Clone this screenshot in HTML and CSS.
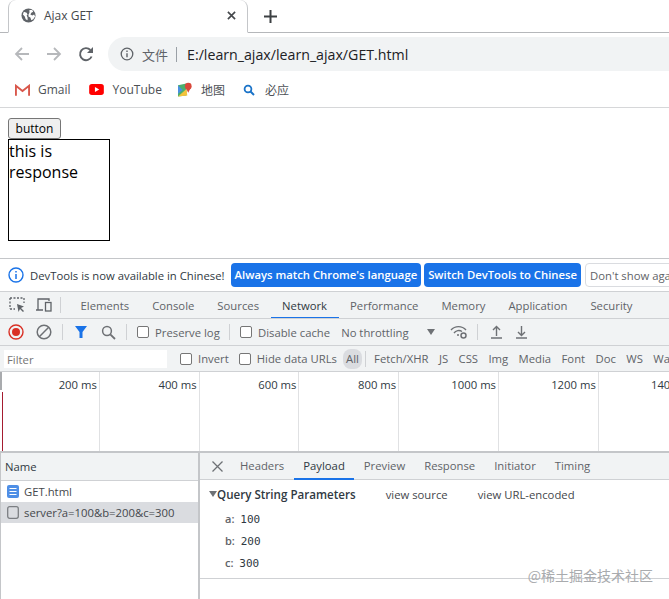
FILE: index.html
```html
<!DOCTYPE html>
<html lang="zh-CN">
<head>
    <meta charset="UTF-8">
    <title>Ajax GET</title>
    <link rel="stylesheet" href="styles.css">
</head>
<body>
    <div class="tabstrip">
        <div class="tab">
            <svg class="tab-icon" width="15" height="15" viewBox="0 0 16 16"><circle cx="8" cy="8" r="7.500" fill="#5f6368"/><path d="M3 4l3 1 1 2-1 1 1 2v3l-2-1-1-3-2-2zM9 2h3l1 2-2 1-1 2 2 1 2-1 1 2-2 3-2 1-1-3-2-1 0-2 1-2z" fill="#fff"/></svg>
            <span class="tab-title">Ajax GET</span>
            <svg class="tab-close" width="9" height="9" viewBox="0 0 10 10"><path d="M1 1l8 8M9 1l-8 8" stroke="#45484c" stroke-width="1.800"/></svg>
        </div>
        <svg class="new-tab" width="13" height="13" viewBox="0 0 13 13"><path d="M6.500 0v13M0 6.500h13" stroke="#3c4043" stroke-width="2"/></svg>
    </div>
    <div class="toolbar">
        <svg width="16" height="16" viewBox="0 0 16 16"><path d="M15 8H2M8 2L2 8l6 6" fill="none" stroke="#b6b8bb" stroke-width="1.800"/></svg>
        <svg width="16" height="16" viewBox="0 0 16 16"><path d="M1 8h13M8 2l6 6-6 6" fill="none" stroke="#b6b8bb" stroke-width="1.800"/></svg>
        <svg width="16" height="16" viewBox="0 0 16 16"><path d="M13.600 10.500A6 6 0 1 1 12.400 4" fill="none" stroke="#5f6368" stroke-width="1.900"/><path d="M15 1v6H9z" fill="#5f6368"/></svg>
        <div class="omnibox">
            <svg width="14" height="14" viewBox="0 0 15 15"><circle cx="7.500" cy="7.500" r="6.200" fill="none" stroke="#5f6368" stroke-width="1.400"/><path d="M7.500 6.600v4.400M7.500 3.800v1.600" stroke="#5f6368" stroke-width="1.500"/></svg>
            <span class="omni-label">文件</span>
            <span class="omni-sep"></span>
            <span class="omni-url">E:/learn_ajax/learn_ajax/GET.html</span>
        </div>
    </div>
    <div class="bookmarks">
        <span class="bookmark bookmark-gmail">
            <svg width="15" height="12" viewBox="0 0 16 12"><path d="M1 12V1.500L8 7l7-5.500V12" fill="none" stroke="#d9574b" stroke-width="2"/></svg>
            Gmail
        </span>
        <span class="bookmark bookmark-yt">
            <svg width="15" height="11" viewBox="0 0 16 12"><rect width="16" height="12" rx="3" fill="#f00"/><path d="M6.300 3.300v5.400L11 6z" fill="#fff"/></svg>
            YouTube
        </span>
        <span class="bookmark bookmark-maps">
            <svg width="14" height="15" viewBox="0 0 15 15"><path d="M0 3l9-2v13l-9 1z" fill="#4caf6d"/><path d="M0 15L9 7l1 7z" fill="#f5c33b"/><path d="M0 3l5 5-5 4z" fill="#4a90e2"/><circle cx="11" cy="4" r="3.600" fill="#d9483b"/><path d="M8.500 6l2.500 5 2.500-5z" fill="#d9483b"/></svg>
            地图
        </span>
        <span class="bookmark bookmark-bing">
            <svg width="12" height="12" viewBox="0 0 12 12"><circle cx="5" cy="5" r="3.400" fill="none" stroke="#1a73c8" stroke-width="1.800"/><path d="M7.500 7.500L11 11" stroke="#1a73c8" stroke-width="2"/></svg>
            必应
        </span>
    </div>

    <div class="page">
        <button class="page-btn">button</button>
        <div class="response">this is response</div>
    </div>

    <div class="devtools">
        <div class="infobar">
            <svg width="16" height="16" viewBox="0 0 16 16"><circle cx="8" cy="8" r="7" fill="none" stroke="#1a73e8" stroke-width="1.400"/><path d="M8 7v5M8 4v1.600" stroke="#1a73e8" stroke-width="1.500"/></svg>
            <span class="info-text">DevTools is now available in Chinese!</span>
            <span class="info-btn">Always match Chrome's language</span>
            <span class="info-btn">Switch DevTools to Chinese</span>
            <span class="info-btn info-btn-plain">Don't show again</span>
        </div>

        <div class="dt-tabs">
            <svg class="dt-icon" width="16" height="16" viewBox="0 0 16 16"><path d="M1 1h14M1 1v11M15 1v5M1 12h5" fill="none" stroke="#5f6368" stroke-width="1.300" stroke-dasharray="2 1.500"/><path d="M8 7l7 2.500-3 1.500 3 3-1 1-3-3-1.500 3z" fill="#5f6368"/></svg>
            <svg class="dt-icon dt-icon-device" width="17" height="14" viewBox="0 0 17 14"><path d="M1 12h7M3 12V1h11v2" fill="none" stroke="#5f6368" stroke-width="1.300"/><rect x="10.500" y="4.500" width="5.500" height="8.500" fill="none" stroke="#5f6368" stroke-width="1.300"/></svg>
            <span class="vsep"></span>
            <span class="dt-tab">Elements</span>
            <span class="dt-tab">Console</span>
            <span class="dt-tab">Sources</span>
            <span class="dt-tab active">Network</span>
            <span class="dt-tab">Performance</span>
            <span class="dt-tab">Memory</span>
            <span class="dt-tab">Application</span>
            <span class="dt-tab">Security</span>
        </div>

        <div class="net-toolbar">
            <svg width="16" height="16" viewBox="0 0 16 16"><circle cx="8" cy="8" r="7" fill="none" stroke="#d93025" stroke-width="1.400"/><circle cx="8" cy="8" r="4" fill="#d93025"/></svg>
            <svg class="ml12" width="16" height="16" viewBox="0 0 16 16"><circle cx="8" cy="8" r="6.800" fill="none" stroke="#6e7175" stroke-width="1.500"/><path d="M3.300 12.700l9.400-9.400" stroke="#6e7175" stroke-width="1.500"/></svg>
            <span class="vsep ml10"></span>
            <svg class="ml11" width="14" height="14" viewBox="0 0 14 14"><path d="M1 1h12L8.500 7v6h-3V7z" fill="#1a73e8"/></svg>
            <svg class="ml13" width="15" height="15" viewBox="0 0 15 15"><circle cx="6" cy="6" r="4.400" fill="none" stroke="#6e7175" stroke-width="1.500"/><path d="M9.300 9.300L14 14" stroke="#6e7175" stroke-width="1.800"/></svg>
            <span class="vsep ml10"></span>
            <label class="check check-preserve"><span class="box"></span>Preserve log</label>
            <span class="vsep"></span>
            <label class="check ml10"><span class="box"></span>Disable cache</label>
            <span class="throttle">No throttling</span>
            <span class="caret"></span>
            <svg class="wifi" width="18" height="14" viewBox="0 0 18 14"><path d="M1 5a10 10 0 0 1 15 0M4 8a6 6 0 0 1 8-1.500" fill="none" stroke="#6e7175" stroke-width="1.400"/><circle cx="8" cy="10" r="1" fill="#6e7175"/><circle cx="13.500" cy="10.500" r="2.500" fill="none" stroke="#6e7175" stroke-width="1.500"/></svg>
            <span class="vsep ml9"></span>
            <svg class="ml12" width="13" height="14" viewBox="0 0 13 14"><path d="M6.500 11V2M3 5l3.500-3.500L10 5M1 13h11" fill="none" stroke="#6e7175" stroke-width="1.400"/></svg>
            <svg class="ml12" width="13" height="14" viewBox="0 0 13 14"><path d="M6.500 1v9M3 7l3.500 3.500L10 7M1 13h11" fill="none" stroke="#6e7175" stroke-width="1.400"/></svg>
        </div>

        <div class="filter-row">
            <span class="filter-input">Filter</span>
            <label class="check check-invert"><span class="box"></span>Invert</label>
            <label class="check check-hide"><span class="box"></span>Hide data URLs</label>
            <span class="type type-all">All</span>
            <span class="vsep"></span>
            <span class="type">Fetch/XHR</span>
            <span class="type">JS</span>
            <span class="type">CSS</span>
            <span class="type">Img</span>
            <span class="type">Media</span>
            <span class="type">Font</span>
            <span class="type">Doc</span>
            <span class="type">WS</span>
            <span class="type">Wasm</span>
        </div>

        <div class="timeline">
            <span class="tick">200 ms</span>
            <span class="tick">400 ms</span>
            <span class="tick">600 ms</span>
            <span class="tick">800 ms</span>
            <span class="tick">1000 ms</span>
            <span class="tick">1200 ms</span>
            <span class="tick">1400 ms</span>
            <span class="grip"></span>
            <span class="load-mark"></span>
        </div>

        <div class="split">
            <div class="requests">
                <div class="req-head">Name</div>
                <div class="req-row">
                    <svg width="12" height="13" viewBox="0 0 12 13"><rect width="12" height="13" rx="2" fill="#4f8fe6"/><path d="M2.500 3.500h7M2.500 6.500h7M2.500 9.500h7" stroke="#fff" stroke-width="1.200"/></svg>
                    GET.html
                </div>
                <div class="req-row selected">
                    <svg width="12" height="13" viewBox="0 0 12 13"><rect x=".7" y=".7" width="10.600" height="11.600" rx="2" fill="none" stroke="#7b7e82" stroke-width="1.300"/></svg>
                    server?a=100&amp;b=200&amp;c=300
                </div>
            </div>
            <div class="details">
                <div class="detail-tabs">
                    <svg class="detail-close" width="11" height="11" viewBox="0 0 11 11"><path d="M.5.500l10 10M10.500.500l-10 10" stroke="#6e7175" stroke-width="1.300"/></svg>
                    <span class="dt-tab">Headers</span>
                    <span class="dt-tab active">Payload</span>
                    <span class="dt-tab">Preview</span>
                    <span class="dt-tab">Response</span>
                    <span class="dt-tab">Initiator</span>
                    <span class="dt-tab">Timing</span>
                </div>
                <div class="payload">
                    <div class="payload-head">
                        <span class="tri"></span>
                        <strong>Query String Parameters</strong>
                        <span class="view-link">view source</span>
                        <span class="view-link">view URL-encoded</span>
                    </div>
                    <div class="param"><b>a:</b> <code>100</code></div>
                    <div class="param"><b>b:</b> <code>200</code></div>
                    <div class="param"><b>c:</b> <code>300</code></div>
                </div>
                <div class="payload-end"></div>
            </div>
        </div>
    </div>
    <div class="watermark">@稀土掘金技术社区</div>
</body>
</html>
```

FILE: styles.css
```css
* {
    box-sizing: border-box;
}
html, body {
    height: 599px;
    overflow: hidden;
}
body {
    margin: 0;
    background: #fff;
    color: #303942;
    font-family: "Open Sans", "Noto Sans CJK SC", sans-serif;
    font-size: 11.300px;
    position: relative;
}
svg {
    flex: none;
    display: block;
}

/* browser chrome */
.tabstrip {
    height: 33px;
    display: flex;
    align-items: center;
    border-bottom: 1px solid #b5b7ba;
}
.tab {
    width: 240px;
    height: 33px;
    margin-left: 8px;
    display: flex;
    align-items: center;
    padding: 0 11px 0 12px;
    background: #fff;
    border: 1px solid #c4c6c9;
    border-top: none;
    border-bottom: 1px solid #fff;
    border-top-left-radius: 8px;
    border-top-right-radius: 8px;
}
.tab-title {
    margin-left: 8px;
    flex: 1;
    color: #45484c;
    font-size: 12px;
}
.new-tab {
    margin-left: 16px;
}
.toolbar {
    height: 43px;
    display: flex;
    align-items: center;
    padding: 0 0 1px 14px;
    gap: 16px;
}
.omnibox {
    flex: 1;
    height: 34px;
    margin-left: -2px;
    margin-right: -20px;
    display: flex;
    align-items: center;
    padding-left: 12px;
    background: #f1f3f4;
    border-radius: 17px;
}
.omni-label {
    margin-left: 8px;
    color: #5f6368;
    font-size: 13px;
}
.omni-sep {
    width: 1px;
    height: 15px;
    margin: 0 10px 0 8px;
    background: #9aa0a6;
}
.omni-url {
    color: #202124;
    font-size: 14.200px;
}
.bookmarks {
    height: 32px;
    display: flex;
    align-items: center;
    padding: 0 0 4px 15px;
    border-bottom: 1px solid #d6d7d9;
    color: #4d5156;
}
.bookmark {
    display: flex;
    align-items: center;
    gap: 8px;
    font-size: 12px;
}
.bookmark-yt {
    margin-left: 18px;
    gap: 9px;
}
.bookmark-maps {
    margin-left: 16px;
    gap: 9px;
}
.bookmark-bing {
    margin-left: 18px;
    gap: 10px;
}

/* the page */
.page {
    height: 150px;
    padding: 10px 8px 0;
}
.page-btn {
    display: block;
    width: 53px;
    height: 21px;
    padding: 0;
    background: #efefef;
    border: 1px solid #767676;
    border-radius: 3px;
    color: #000;
    font-family: "Open Sans", sans-serif;
    font-size: 12px;
}
.response {
    width: 102px;
    height: 102px;
    padding-top: 1px;
    border: 1px solid #000;
    color: #000;
    font-family: "Open Sans", sans-serif;
    font-size: 16px;
    line-height: 21px;
}

/* devtools */
.devtools {
    height: 341px;
    border-top: 1px solid #c4c6c9;
    color: #5f6368;
}
.infobar {
    height: 33px;
    display: flex;
    align-items: center;
    padding-left: 8px;
    border-bottom: 1px solid #cfd1d4;
    white-space: nowrap;
    overflow: hidden;
}
.info-text {
    margin-left: 6px;
    margin-right: 6px;
    color: #303942;
}
.info-btn {
    flex: none;
    height: 24px;
    line-height: 23px;
    margin-right: 3px;
    padding: 0 4px;
    background: #1a73e8;
    border-radius: 4px;
    color: #fff;
    font-weight: 600;
}
.info-btn-plain {
    margin-left: 1px;
    background: #fff;
    border: 1px solid #dadce0;
    color: #5f6368;
    font-weight: 400;
}
.dt-tabs {
    height: 27px;
    display: flex;
    align-items: stretch;
    padding-left: 9px;
    background: #f1f3f4;
    border-bottom: 1px solid #cfd1d4;
    white-space: nowrap;
    overflow: hidden;
}
.dt-icon {
    align-self: center;
}
.dt-icon-device {
    margin-left: 10px;
}
.dt-tabs > .vsep {
    align-self: center;
    margin: 0 8px 0 8px;
}
.dt-tab {
    flex: none;
    display: flex;
    align-items: center;
    padding: 0 11.500px;
    margin-bottom: -1px;
    border-bottom: 2px solid transparent;
}
.dt-tabs .dt-tab {
    padding-top: 1px;
}
.dt-tab.active {
    border-bottom-color: #1a73e8;
    color: #303942;
}
.vsep {
    flex: none;
    width: 1px;
    height: 16px;
    background: #cfd1d4;
}
.net-toolbar {
    height: 27px;
    display: flex;
    align-items: center;
    padding-left: 8px;
    background: #f1f3f4;
    border-bottom: 1px solid #cfd1d4;
    white-space: nowrap;
}
.ml9 {
    margin-left: 9px;
}
.ml10 {
    margin-left: 10px;
}
.ml11 {
    margin-left: 11px;
}
.ml12 {
    margin-left: 12px;
}
.ml13 {
    margin-left: 13px;
}
.check {
    flex: none;
    display: flex;
    align-items: center;
    gap: 6px;
}
.check-preserve {
    margin-left: 10px;
    width: 92px;
}
.box {
    flex: none;
    width: 12px;
    height: 12px;
    background: #fff;
    border: 1px solid #767676;
    border-radius: 2px;
}
.throttle {
    margin-left: 11px;
}
.caret {
    width: 0;
    height: 0;
    margin-left: 18px;
    border: 4px solid transparent;
    border-top: 6px solid #6e7175;
    border-bottom: none;
}
.wifi {
    margin-left: 15px;
}
.filter-row {
    height: 26px;
    display: flex;
    align-items: center;
    padding-left: 4px;
    background: #f1f3f4;
    border-bottom: 1px solid #cfd1d4;
    white-space: nowrap;
    overflow: hidden;
}
.filter-input {
    flex: none;
    width: 163px;
    height: 18px;
    line-height: 19px;
    padding-left: 3px;
    background: #fff;
    color: #757575;
}
.check-invert {
    margin-left: 13px;
}
.check-hide {
    margin-left: 10px;
}
.type {
    flex: none;
    padding: 0 5.200px;
}
.type-all {
    margin-left: 6px;
    height: 20px;
    line-height: 20px;
    background: #dadce0;
    border-radius: 8px;
    padding: 0 3px;
}
.filter-row > .vsep {
    margin: 0 3px;
}
.timeline {
    height: 81px;
    display: grid;
    grid-template-columns: repeat(7, 99.800px);
    position: relative;
    border-bottom: 2px solid #c4c6c9;
    overflow: hidden;
}
.tick {
    padding: 5px 2px 0 0;
    border-right: 1px solid #e0e1e3;
    text-align: right;
    color: #303942;
    white-space: nowrap;
}
.grip {
    position: absolute;
    left: 0;
    top: 0;
    width: 2px;
    height: 18px;
    background: #a9abae;
}
.load-mark {
    position: absolute;
    left: 2px;
    top: 20px;
    bottom: 0;
    width: 1px;
    background: #a51c30;
}
.split {
    height: 148px;
    display: flex;
}
.requests {
    width: 200px;
    border-left: 1px solid #c4c6c9;
    border-right: 2px solid #c4c6c9;
    color: #303942;
}
.req-head {
    height: 28px;
    line-height: 27px;
    padding-left: 4px;
    background: #f1f3f4;
    border-bottom: 1px solid #cfd1d4;
}
.req-row {
    height: 21px;
    display: flex;
    align-items: center;
    gap: 5px;
    padding-left: 6px;
    color: #45484c;
}
.req-row.selected {
    background: #dadce0;
}
.details {
    flex: 1;
    min-width: 0;
}
.detail-tabs {
    height: 27px;
    display: flex;
    align-items: stretch;
    padding-left: 12px;
    background: #f1f3f4;
    border-bottom: 1px solid #cfd1d4;
    white-space: nowrap;
}
.detail-close {
    align-self: center;
    margin-right: 7.500px;
}
.detail-tabs .dt-tab {
    padding: 0 9.500px;
}
.payload {
    height: 98px;
    padding: 4px 0 0 9px;
    color: #303942;
}
.payload-head {
    height: 20px;
    margin-bottom: 4px;
    display: flex;
    align-items: center;
    white-space: nowrap;
}
.tri {
    width: 0;
    height: 0;
    border: 4px solid transparent;
    border-top: 6px solid #6e7175;
    border-bottom: none;
}
.payload-head strong {
    font-size: 11.600px;
    font-weight: 600;
    color: #303942;
}
.view-link {
    margin-left: 30px;
    color: #45484c;
}
.param {
    height: 22px;
    line-height: 22px;
    padding-left: 16px;
    font-size: 11px;
}
.param b {
    font-weight: 600;
    color: #5f6368;
}
.param code {
    margin-left: 3px;
    font-family: "DejaVu Sans Mono", monospace;
    font-size: 11px;
    color: #303942;
}
.payload-end {
    border-top: 1px solid #cfd1d4;
}
.watermark {
    position: absolute;
    right: 16px;
    top: 565px;
    color: #a9abae;
    font-family: "Noto Sans CJK SC", sans-serif;
    font-size: 14px;
    white-space: nowrap;
}
```
